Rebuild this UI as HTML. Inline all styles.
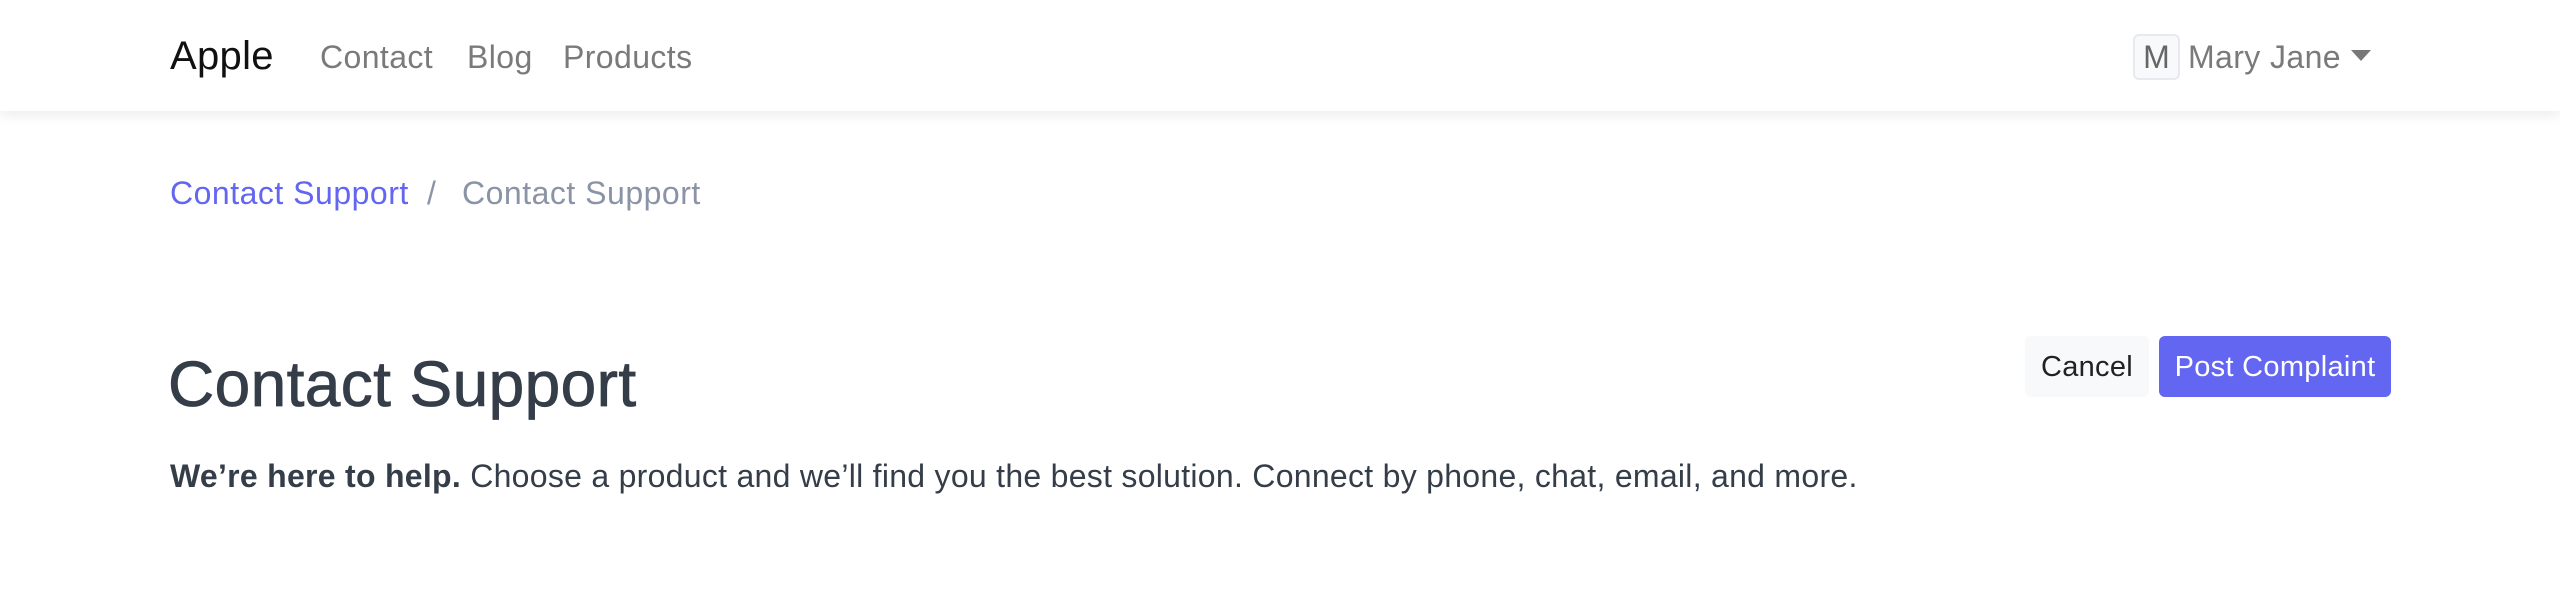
<!DOCTYPE html>
<html><head><meta charset="utf-8"><style>
*{box-sizing:border-box;margin:0;padding:0}
body{width:2560px;height:592px;background:#fff;font-family:"Liberation Sans",Arial,sans-serif;position:relative;overflow:hidden;color:#343d48}
.nav{position:absolute;left:0;top:0;width:2560px;height:111px;background:#fff;box-shadow:0 4px 12px rgba(0,0,0,.08)}
.a{position:absolute;white-space:nowrap}
.brand{left:170px;top:34px;font-size:40px;color:#111;letter-spacing:.3px}
.nl{top:39px;font-size:32px;color:#7a7a7a;letter-spacing:.4px}
.av{left:2133px;top:34px;width:47px;height:46px;border:2px solid #e8eaf0;border-radius:6px;background:#f8f9fb;font-size:32px;color:#666;text-align:center;line-height:42px}
.caret{left:2351px;top:50px;width:0;height:0;border-left:10px solid transparent;border-right:10px solid transparent;border-top:11px solid #777}
.bc{top:175px;font-size:32px;letter-spacing:.5px}
.h{left:168px;top:347px;font-size:64px;color:#343d48;letter-spacing:.4px;-webkit-text-stroke:.8px #343d48}
.p{left:170px;top:458px;font-size:32px;color:#343d48;letter-spacing:.28px}
.btn{top:336px;height:61px;font-size:29px;line-height:63px;text-align:center;border-radius:6px;letter-spacing:.3px}
</style></head><body>
<div class="nav">
<div class="a brand">Apple</div>
<div class="a nl" style="left:320px">Contact</div>
<div class="a nl" style="left:467px">Blog</div>
<div class="a nl" style="left:563px">Products</div>
<div class="a av">M</div>
<div class="a nl" style="left:2188px">Mary Jane</div>
<div class="a caret"></div>
</div>
<div class="a bc" style="left:170px;color:#6366f1">Contact Support</div>
<div class="a bc" style="left:427px;color:#8a94a6">/</div>
<div class="a bc" style="left:462px;color:#8a94a6">Contact Support</div>
<div class="a h">Contact Support</div>
<div class="a btn" style="left:2025px;width:124px;background:#f8f9fb;color:#222">Cancel</div>
<div class="a btn" style="left:2159px;width:232px;background:#6366f1;color:#fff">Post Complaint</div>
<div class="a p"><b>We’re here to help.</b> Choose a product and we’ll find you the best solution. Connect by phone, chat, email, and more.</div>
</body></html>
